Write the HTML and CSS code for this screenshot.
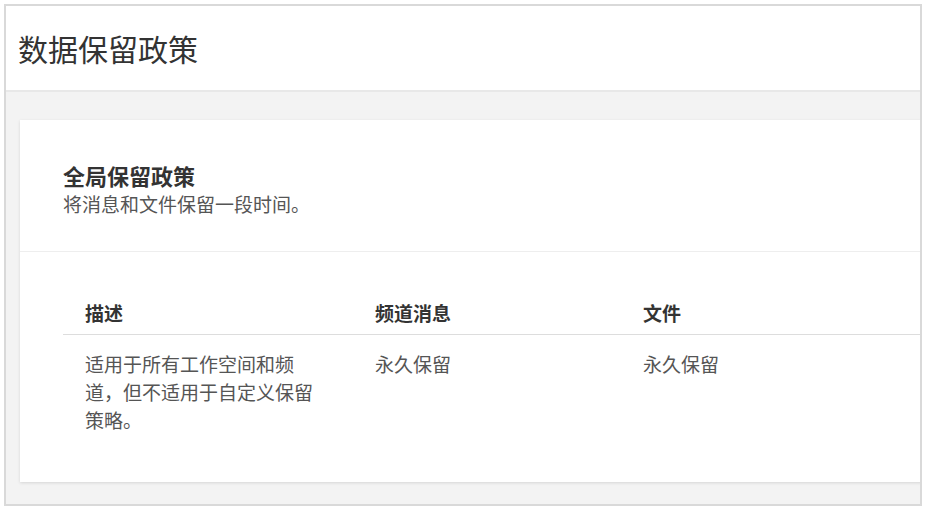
FILE: index.html
```html
<!DOCTYPE html>
<html lang="zh-CN">

<head>
    <meta charset="UTF-8">
    <title>数据保留政策</title>
    <link rel="stylesheet" href="styles.css">
</head>

<body>
    <div class="frame">
        <div class="page_head">
            <h1>数据保留政策</h1>
        </div>
        <div class="page_body">
            <div class="card">
                <div class="card_intro">
                    <h2>全局保留政策</h2>
                    <p>将消息和文件保留一段时间。</p>
                </div>
                <div class="policy_table">
                    <div class="policy_row policy_head">
                        <div class="cell">描述</div>
                        <div class="cell">频道消息</div>
                        <div class="cell">文件</div>
                    </div>
                    <div class="policy_row">
                        <div class="cell cell_desc">适用于所有工作空间和频道，但不适用于自定义保留策略。</div>
                        <div class="cell">永久保留</div>
                        <div class="cell">永久保留</div>
                    </div>
                </div>
            </div>
        </div>
    </div>
</body>

</html>
```

FILE: styles.css
```css
* {
    margin: 0;
    padding: 0;
    box-sizing: border-box;
}

body {
    margin: 4px 6px 6px 4px;
    background-color: #fff;
    font-family: "Noto Sans CJK SC", "Noto Sans", sans-serif;
    color: #4a4a4a;
}

.frame {
    border: 2px solid #d9d9d9;
    overflow: hidden;
}

.page_head {
    height: 86px;
    display: flex;
    align-items: center;
    padding-left: 12px;
    border-bottom: 2px solid #e8e8e8;
    background-color: #fff;
}

.page_head h1 {
    font-size: 30px;
    font-weight: 400;
    color: #333;
    line-height: 1;
}

.page_body {
    background-color: #f3f3f3;
    padding: 28px 0 22px 14px;
}

.card {
    background-color: #fff;
    margin-right: -30px;
    box-shadow: 0 1px 3px rgba(0, 0, 0, 0.12);
}

.card_intro {
    padding: 40px 0 33px 43px;
    border-bottom: 1px solid #eeeeee;
}

.card_intro h2 {
    font-size: 22px;
    font-weight: 700;
    line-height: 30px;
    color: #333;
}

.card_intro p {
    font-size: 19px;
    line-height: 28px;
    color: #555;
}

.policy_table {
    margin-left: 43px;
    font-size: 19px;
    line-height: 28px;
}

.policy_row {
    display: grid;
    grid-template-columns: 290px 268px 1fr;
}

.policy_row .cell {
    padding: 15px 30px 48px 22px;
    color: #555;
}

.policy_head {
    border-bottom: 1px solid #dddddd;
}

.policy_head .cell {
    padding: 47px 0 7px 22px;
    font-weight: 700;
    color: #333;
}
```
